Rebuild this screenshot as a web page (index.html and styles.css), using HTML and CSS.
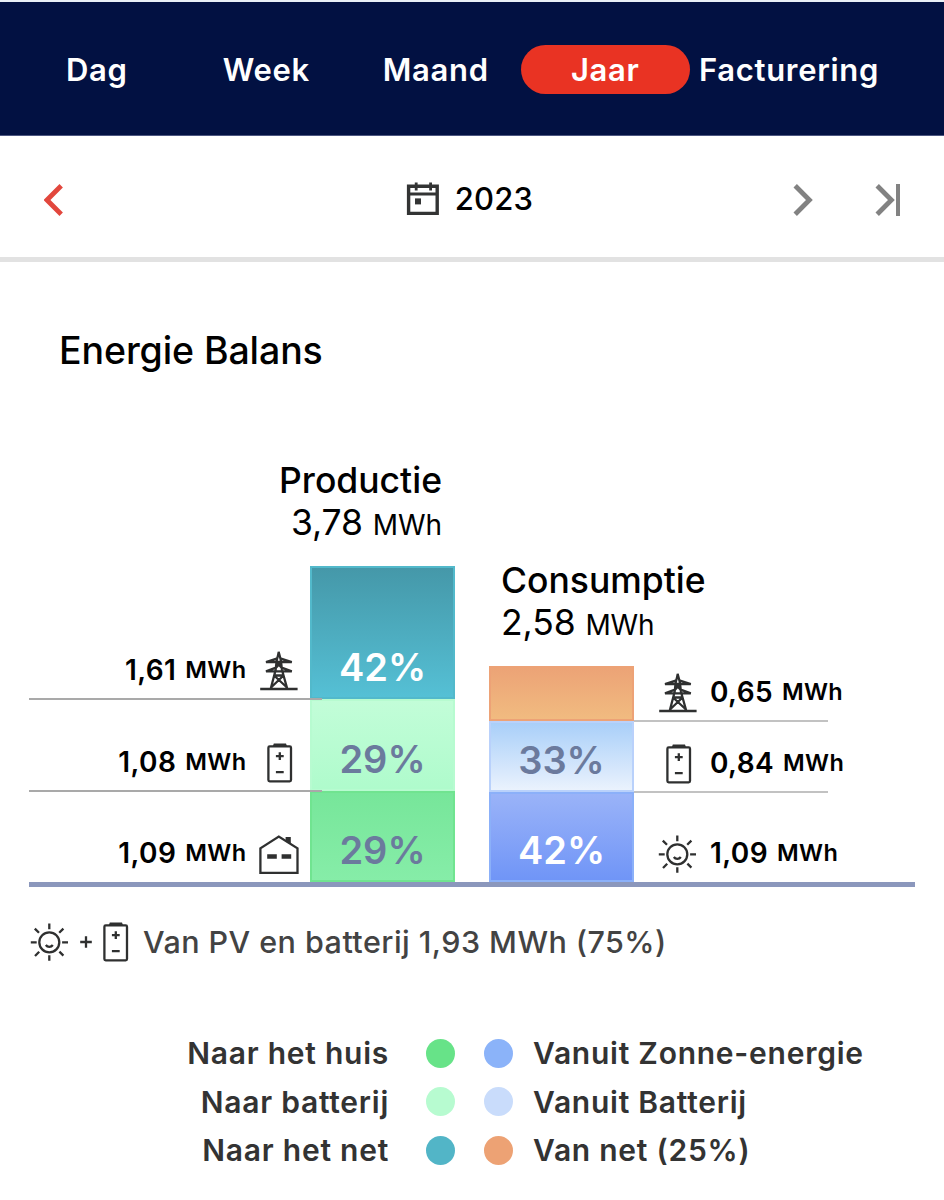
FILE: index.html
```html
<!DOCTYPE html>
<html lang="nl">
<head>
  <meta charset="UTF-8">
  <title>Energie Balans</title>
  <meta name="viewport" content="width=device-width, initial-scale=1.0">
  <link rel="stylesheet" href="styles.css">
</head>
<body>
  <!-- shared icons -->
  <svg class="sprite" width="0" height="0">
    <symbol id="pylon" viewBox="0 0 40 40">
      <path d="M1.2 38H38.6M19.8 1.5L17.8 9L16.6 19L11.8 37.5M19.8 1.5L21.8 9L23 19L28.2 37.5M17.6 7.6L7 11H32.8L22 7.6M17 16.6L7 20.3H32.8L22.6 16.6M17.4 11L22.6 16.6M22.2 11L17 16.6M16 24.5H23.6M15.6 25L28 36.5M24 25L12 36.5"/>
      <path d="M19.8 .6V5"/>
    </symbol>
    <symbol id="battery" viewBox="0 0 40 40">
      <rect x="9.4" y="3.4" width="22.6" height="35" rx="1.3"/>
      <path class="fill" d="M13.6 3.8L14.8 .6H27L28.2 3.8Z"/>
      <path d="M20.8 9.2V17M16.9 13.1H24.7M16.9 29.2H24.7"/>
    </symbol>
    <symbol id="house" viewBox="0 0 40 40">
      <path d="M1.4 39V14.3L19.8 2.6L38.5 14.3V39Z"/>
      <path class="fill" d="M26.6 7.2V3H31.8V10.5Z"/>
      <path class="fill" d="M8.2 20.3H17.8V24.8H8.2ZM22.6 20.3H32.2V24.8H22.6Z"/>
    </symbol>
    <symbol id="sun" viewBox="0 0 40 40">
      <circle cx="19.3" cy="20.3" r="10"/>
      <path d="M19.3 1.6V7.2M19.3 33.2V38.8M.8 20.3H6.7M32.1 20.3H38M4.8 6.6L9 10.8M33.4 6.6L29.2 10.8M5 34L9.2 29.8M33.4 33.6L29.4 29.6M15.8 23C17.5 25.4 21.1 25.4 22.8 23"/>
    </symbol>
  </svg>

  <nav class="tabs">
    <a class="tab">Dag</a>
    <a class="tab">Week</a>
    <a class="tab">Maand</a>
    <a class="tab active">Jaar</a>
    <a class="tab wide">Facturering</a>
  </nav>

  <header class="period">
    <svg class="prev" width="20" height="32" viewBox="0 0 20 32"><path d="M17.2 1.8L3 16L17.2 30.2"/></svg>
    <div class="year">
      <svg class="calendar" width="34" height="34" viewBox="0 0 34 34">
        <path d="M2.6 4.2H31.2V31.4H2.6Z"/>
        <path class="thin" d="M2 12H32M10.2 .6V8.6M24.6 .6V8.6"/>
        <rect x="9" y="16.4" width="6" height="6"/>
      </svg>
      <span>2023</span>
    </div>
    <div class="next-group">
      <svg width="20" height="32" viewBox="0 0 20 32"><path d="M2.2 1.8L16.4 16L2.2 30.2"/></svg>
      <svg width="27" height="32" viewBox="0 0 27 32"><path d="M2.2 1.8L16.4 16L2.2 30.2"/><path class="bar" d="M23 0V32"/></svg>
    </div>
  </header>

  <main>
    <h1>Energie Balans</h1>

    <div class="chart">
      <section class="side production">
        <h2>Productie</h2>
        <p class="total">3,78 <small>MWh</small></p>
        <div class="row grid-out">
          <div class="label">1,61 <small>MWh</small><svg class="icon"><use href="#pylon"/></svg></div>
          <div class="segment light">42%</div>
        </div>
        <div class="row battery-in">
          <div class="label">1,08 <small>MWh</small><svg class="icon"><use href="#battery"/></svg></div>
          <div class="segment">29%</div>
        </div>
        <div class="row home">
          <div class="label">1,09 <small>MWh</small><svg class="icon"><use href="#house"/></svg></div>
          <div class="segment">29%</div>
        </div>
      </section>

      <section class="side consumption">
        <h2>Consumptie</h2>
        <p class="total">2,58 <small>MWh</small></p>
        <div class="row grid-in">
          <div class="segment"></div>
          <div class="label"><svg class="icon"><use href="#pylon"/></svg>0,65 <small>MWh</small></div>
        </div>
        <div class="row battery-out">
          <div class="segment">33%</div>
          <div class="label"><svg class="icon"><use href="#battery"/></svg>0,84 <small>MWh</small></div>
        </div>
        <div class="row solar">
          <div class="segment light">42%</div>
          <div class="label"><svg class="icon"><use href="#sun"/></svg>1,09 <small>MWh</small></div>
        </div>
      </section>
    </div>

    <div class="summary">
      <svg class="icon"><use href="#sun"/></svg>
      <svg class="plus" width="12" height="12" viewBox="0 0 12 12"><path d="M6 .2V11.8M.2 6H11.8"/></svg>
      <svg class="icon"><use href="#battery"/></svg>
      <span>Van PV en batterij 1,93 MWh (75%)</span>
    </div>

    <div class="legend">
      <span class="left">Naar het huis</span><i class="dot c-home"></i><i class="dot c-solar"></i><span>Vanuit Zonne-energie</span>
      <span class="left">Naar batterij</span><i class="dot c-battery-in"></i><i class="dot c-battery-out"></i><span>Vanuit Batterij</span>
      <span class="left">Naar het net</span><i class="dot c-grid-out"></i><i class="dot c-grid-in"></i><span>Van net (25%)</span>
    </div>
  </main>
</body>
</html>
```
FILE: styles.css
```css
* {
  box-sizing: border-box;
}
body {
  margin: 0;
  height: 1200px;
  overflow: hidden;
  font-family: Inter, "Liberation Sans", sans-serif;
  background: #fff;
  color: #000;
}
h1, h2, p {
  margin: 0;
}
svg {
  display: block;
  flex: none;
  fill: none;
  stroke: #2f3030;
  stroke-width: 2.3;
}
.sprite {
  position: absolute;
}
.fill {
  fill: #2f3030;
  stroke: none;
}
.tabs {
  display: flex;
  height: 136px;
  padding: 43px 0 0 12px;
  border-top: 2px solid #e9f0f6;
  border-bottom: 1px solid #4c5680;
  background: #021142;
}
.tab {
  width: 169.5px;
  height: 49px;
  line-height: 49px;
  border-radius: 25px;
  color: #fff;
  font-size: 31px;
  font-weight: 600;
  letter-spacing: 0.7px;
  text-align: center;
  white-space: nowrap;
}
.tab.active {
  background: #e93323;
}
.tab.wide {
  width: 198px;
}
.period {
  display: grid;
  grid-template-columns: 1fr auto 1fr;
  align-items: center;
  height: 126px;
  padding: 6px 42px 0 44px;
  border-bottom: 5px solid #e2e2e2;
}
.period svg {
  stroke: #828282;
  stroke-width: 4.8;
}
.period .bar {
  stroke-width: 4;
}
.period .prev {
  stroke: #e2473d;
}
.year {
  display: flex;
  align-items: center;
  gap: 15px;
  margin-right: 7px;
  padding-bottom: 2px;
  font-size: 31px;
  font-weight: 500;
  letter-spacing: 0.2px;
  line-height: 34px;
}
.period .calendar {
  stroke: #333434;
  stroke-width: 3.4;
}
.calendar .thin {
  stroke-width: 2.8;
}
.calendar rect {
  fill: #333434;
  stroke: none;
}
.next-group {
  display: flex;
  justify-content: flex-end;
  gap: 62px;
}
main {
  padding: 0 29px;
}
h1 {
  padding: 68px 0 0 30px;
  font-size: 37.5px;
  font-weight: 500;
  letter-spacing: -0.1px;
  line-height: 42px;
}
.chart {
  display: flex;
  align-items: flex-end;
  gap: 34px;
  height: 515px;
  border-bottom: 5px solid #8b97bc;
}
.side {
  flex: none;
}
h2 {
  font-size: 35.5px;
  font-weight: 500;
  line-height: 43px;
}
.total {
  padding-bottom: 20px;
  font-size: 35.5px;
  letter-spacing: -0.1px;
  line-height: 42px;
}
.total small {
  font-size: 28px;
}
.production h2, .production .total {
  padding-right: 13px;
  text-align: right;
}
.consumption h2, .consumption .total {
  padding-left: 12px;
}
.row {
  display: flex;
}
.label {
  position: relative;
  display: flex;
  align-items: flex-end;
  padding-bottom: 8px;
  font-size: 28px;
  font-weight: 600;
  letter-spacing: 0.4px;
  word-spacing: 1.5px;
  line-height: 42px;
  white-space: pre;
}
.label small {
  font-size: 23.5px;
}
.icon {
  width: 40px;
  height: 40px;
}
.production .label {
  width: 281px;
  justify-content: flex-end;
  padding-right: 11.5px;
}
.production .icon {
  margin-left: 12px;
}
.consumption .label {
  width: 194px;
  padding-left: 24px;
}
.consumption .icon {
  margin-right: 12px;
}
/* divider under each row, reaching a little over the production bar */
.label::after {
  content: "";
  position: absolute;
  left: 0;
  right: 0;
  bottom: -1px;
  height: 2px;
  background: #c2c2c2;
}
.production .label::after {
  right: -12px;
  background: #a9a9a9;
}
.row:last-child .label::after {
  display: none;
}
.segment {
  display: flex;
  align-items: flex-end;
  justify-content: center;
  width: 145px;
  padding-bottom: 9px;
  border: 2px solid;
  color: #6b7a9d;
  font-size: 38px;
  font-weight: 600;
  line-height: 42px;
}
.light {
  color: #fff;
}
.grid-out { height: 133px; }
.battery-in { height: 92px; }
.home { height: 91px; }
.grid-in { height: 55px; }
.battery-out { height: 71px; }
.solar { height: 90px; }
.grid-out .segment {
  border-color: #52b9cb;
  background: linear-gradient(#4598a9, #55c0d5);
}
.battery-in .segment {
  border-color: #b7fbd0;
  background: linear-gradient(#c2fdd8, #affbcc);
}
.home .segment {
  border-color: #70e490;
  background: linear-gradient(#77e69a, #86eda8);
}
.grid-in .segment {
  border-color: #eda276;
  background: linear-gradient(#eca376, #f1bb80);
}
.battery-out .segment {
  border-color: #b9d1fb;
  background: linear-gradient(#a9cff9, #eaf2fd);
}
.solar .segment {
  border-color: #8bb0f9;
  background: linear-gradient(#9ab3f8, #7095f7);
}
.summary {
  display: flex;
  align-items: center;
  height: 42px;
  margin-top: 34px;
  color: #434343;
  font-size: 30.5px;
  font-weight: 500;
  letter-spacing: 0.45px;
  line-height: 42px;
  white-space: nowrap;
}
.summary .icon:first-child {
  margin-left: 1px;
}
.summary .plus {
  margin: 0 3px 0 10px;
}
.summary span {
  margin-left: 8px;
}
.legend {
  display: grid;
  grid-template-columns: 368px 29px 29px auto;
  grid-auto-rows: 48.5px;
  column-gap: 29px;
  align-items: center;
  margin-top: 66px;
  color: #333;
  font-size: 30px;
  font-weight: 600;
  letter-spacing: 0.75px;
}
.legend span {
  margin-left: -9px;
  white-space: nowrap;
}
.legend .left {
  margin: 0;
  padding-right: 8px;
  text-align: right;
}
.dot {
  width: 29px;
  height: 29px;
  border-radius: 50%;
}
.c-home { background: #67e388; }
.c-battery-in { background: #b7fbd0; }
.c-grid-out { background: #52b5c7; }
.c-solar { background: #8bb3f9; }
.c-battery-out { background: #c9dcfb; }
.c-grid-in { background: #eda274; }
```
